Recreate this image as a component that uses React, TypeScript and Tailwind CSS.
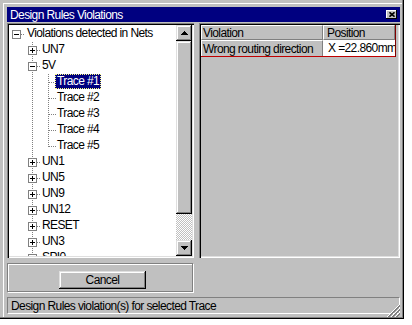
import React from 'react';

type TreeNode = {
  label: string;
  depth: 0 | 1 | 2;
  box?: 'plus' | 'minus';
  last?: boolean;
  selected?: boolean;
};

const nodes: TreeNode[] = [
  { label: 'Violations detected in Nets', depth: 0, box: 'minus' },
  { label: 'UN7', depth: 1, box: 'plus' },
  { label: '5V', depth: 1, box: 'minus' },
  { label: 'Trace #1', depth: 2, selected: true },
  { label: 'Trace #2', depth: 2 },
  { label: 'Trace #3', depth: 2 },
  { label: 'Trace #4', depth: 2 },
  { label: 'Trace #5', depth: 2, last: true },
  { label: 'UN1', depth: 1, box: 'plus' },
  { label: 'UN5', depth: 1, box: 'plus' },
  { label: 'UN9', depth: 1, box: 'plus' },
  { label: 'UN12', depth: 1, box: 'plus' },
  { label: 'RESET', depth: 1, box: 'plus' },
  { label: 'UN3', depth: 1, box: 'plus' },
  { label: 'SPI0', depth: 1, box: 'plus' },
];

// win95 bevels
const raised =
  'shadow-[inset_-1px_-1px_#000,inset_1px_1px_#dfdfdf,inset_-2px_-2px_#808080,inset_2px_2px_#fff]';
const sunken =
  'shadow-[inset_1px_1px_#808080,inset_2px_2px_#000,inset_-1px_-1px_#fff,inset_-2px_-2px_#dfdfdf]';

const labelShift = ['ml-0', '-ml-[1px]', '-ml-[2px]'];

function Connector({
  vertical,
  half,
  horiz,
  box,
}: {
  vertical?: boolean;
  half?: boolean;
  horiz?: boolean;
  box?: 'plus' | 'minus';
}) {
  return (
    <svg width={16} height={16} className="shrink-0" shapeRendering="crispEdges">
      {vertical && (
        <line x1={7.5} y1={0} x2={7.5} y2={half ? 9 : 16} stroke="#808080" strokeDasharray="1 1" />
      )}
      {horiz && (
        <line x1={box ? 12 : 8} y1={8.5} x2={16} y2={8.5} stroke="#808080" strokeDasharray="1 1" />
      )}
      {box && (
        <>
          <rect x={3.5} y={4.5} width={8} height={8} fill="#fff" stroke="#808080" />
          <line x1={5} y1={8.5} x2={10} y2={8.5} stroke="#000" />
          {box === 'plus' && <line x1={7.5} y1={6} x2={7.5} y2={11} stroke="#000" />}
        </>
      )}
    </svg>
  );
}

function TreeRow({ node }: { node: TreeNode }) {
  return (
    <div className="flex h-[16px] items-start whitespace-nowrap">
      {node.depth === 0 && <Connector box={node.box} horiz />}
      {node.depth === 1 && (
        <>
          <Connector />
          <Connector vertical box={node.box} horiz />
        </>
      )}
      {node.depth === 2 && (
        <>
          <Connector />
          <Connector vertical />
          <Connector vertical half={node.last} horiz />
        </>
      )}
      <span
        className={`h-[15px] leading-[13px] px-[1px] border border-dotted ${labelShift[node.depth]} ${
          node.selected ? 'bg-[#000080] text-white border-[#ffff80]' : 'border-transparent'
        }`}
      >
        {node.label}
      </span>
    </div>
  );
}

function Arrow({ up }: { up?: boolean }) {
  return (
    <svg width={7} height={4} shapeRendering="crispEdges">
      <path
        d={up ? 'M3 0h1v1h1v1h1v1h1v1H0V3h1V2h1V1h1z' : 'M0 0h7v1H6v1H5v1H4v1H3V3H2V2H1V1H0z'}
        fill="#000"
      />
    </svg>
  );
}

function ScrollBar() {
  return (
    <div className="w-[16px] h-full flex flex-col bg-[#c0c0c0]">
      <div className={`h-[16px] shrink-0 flex items-center justify-center bg-[#c0c0c0] ${raised}`}>
        <Arrow up />
      </div>
      <div className={`h-[173px] shrink-0 bg-[#c0c0c0] ${raised}`} />
      <div className="flex-1 bg-[image:conic-gradient(#c0c0c0_25%,#fff_0_50%,#c0c0c0_0_75%,#fff_0)] bg-[length:2px_2px]" />
      <div className={`h-[16px] shrink-0 flex items-center justify-center bg-[#c0c0c0] ${raised}`}>
        <Arrow />
      </div>
    </div>
  );
}

function NetTree() {
  return (
    <div className={`w-[187px] h-full shrink-0 bg-white p-[2px] flex ${sunken}`}>
      <div className="flex-1 overflow-hidden pt-[1px]">
        {nodes.map((n) => (
          <TreeRow key={n.label} node={n} />
        ))}
      </div>
      <ScrollBar />
    </div>
  );
}

function ViolationGrid() {
  return (
    <div className={`flex-1 h-full bg-[#c0c0c0] p-[2px] ${sunken}`}>
      <div className="w-[195px] border-r border-[#800000]">
        {/* Header */}
        <div className="flex h-[15px]">
          <div className="w-[122px] flex items-center pl-[1px] border border-t-white border-l-white border-r-[#808080] border-b-[#808080]">
            Violation
          </div>
          <div className="w-[72px] flex items-center pl-[3px] border border-t-white border-l-white border-r-[#808080] border-b-[#808080]">
            Position
          </div>
        </div>
        {/* Row */}
        <div className="flex h-[17px] border-b border-[#c00000]">
          <div className="w-[122px] flex items-center pl-[1px] whitespace-nowrap border-t border-l border-r border-t-white border-l-white border-r-[#808080]">
            Wrong routing direction
          </div>
          <div className="w-[72px] flex items-center pl-[5px] bg-white overflow-hidden whitespace-nowrap">
            X =22.860mm
          </div>
        </div>
      </div>
    </div>
  );
}

function SizeGrip() {
  const whites = [12, 16, 20];
  const grays = [13, 14, 17, 18, 21, 22];
  const px = (c: number) => {
    const out: [number, number][] = [];
    for (let x = Math.max(0, c - 12); x <= Math.min(12, c); x++) out.push([x, c - x]);
    return out;
  };
  return (
    <svg width={13} height={13} className="absolute right-[2px] bottom-0" shapeRendering="crispEdges">
      {whites.flatMap((c) => px(c).map(([x, y]) => <rect key={`w${c}-${x}`} x={x} y={y} width={1} height={1} fill="#fff" />))}
      {grays.flatMap((c) => px(c).map(([x, y]) => <rect key={`g${c}-${x}`} x={x} y={y} width={1} height={1} fill="#808080" />))}
    </svg>
  );
}

export default function App() {
  return (
    <div className="min-h-screen bg-white font-['Liberation_Sans',Arial,sans-serif] text-[12px] tracking-[-0.6px] text-black">
      <div className="w-[404px] h-[319px] bg-[#c0c0c0] pt-[3px] pl-[3px] pr-[2px] pb-[2px] shadow-[inset_-1px_-1px_#000,inset_-2px_-2px_#808080]">
        <div className="relative h-full flex flex-col border-t border-l border-white pt-[3px] pl-[3px] pr-[2px] pb-[3px]">
          {/* Title bar */}
          <div className="h-[15px] shrink-0 flex items-center justify-between bg-[#000080] text-white pl-[3px]">
            <span>Design Rules Violations</span>
            <div className="mr-[3px] w-[11px] h-[9px] flex items-center justify-center bg-[#c0c0c0] shadow-[inset_-1px_-1px_#000,inset_1px_1px_#fff]">
              <svg width={6} height={5} viewBox="0 0 6 5">
                <path d="M0.5 0.3 L5.5 4.7 M5.5 0.3 L0.5 4.7" stroke="#000" strokeWidth={1.6} />
              </svg>
            </div>
          </div>

          <div className="mt-[1px] h-[235px] shrink-0 flex gap-[5px]">
            <NetTree />
            <ViolationGrid />
          </div>

          {/* Cancel group */}
          <div className="mt-[5px] w-[186px] h-[29px] shrink-0 border border-[#808080] shadow-[inset_1px_1px_#fff,1px_1px_#fff]">
            <button
              className={`block mt-[7px] ml-[51px] w-[87px] h-[18px] bg-[#c0c0c0] text-center ${raised}`}
            >
              Cancel
            </button>
          </div>

          {/* Status bar */}
          <div className="mt-[5px] h-[17px] shrink-0 flex items-center pl-[3px] border border-t-[#808080] border-l-[#808080] border-b-white border-r-white whitespace-nowrap">
            Design Rules violation(s) for selected Trace
          </div>

          <SizeGrip />
        </div>
      </div>
    </div>
  );
}
